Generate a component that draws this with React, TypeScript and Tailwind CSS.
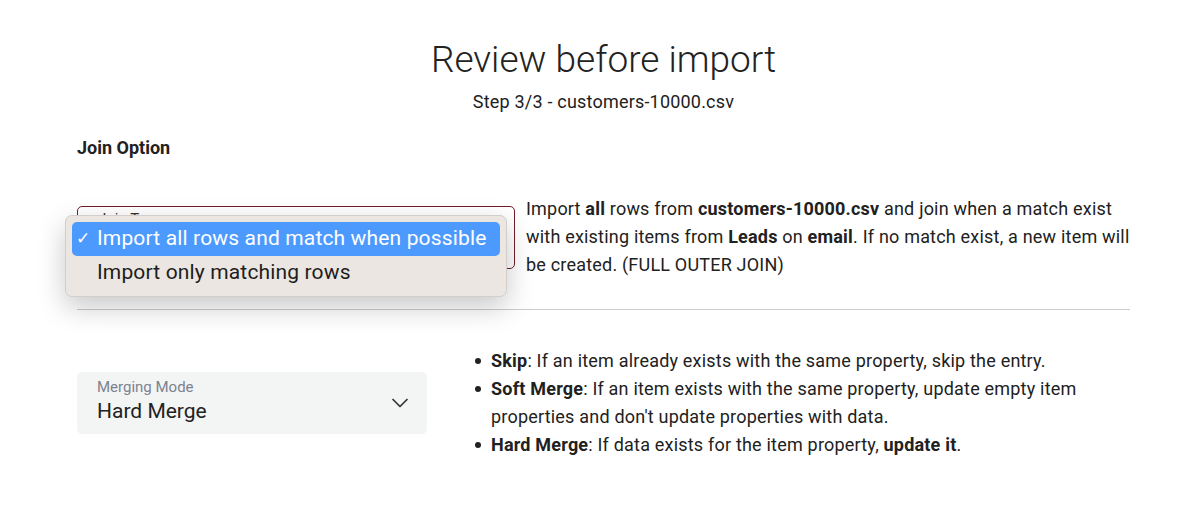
import React from "react";
import { ChevronDown } from "lucide-react";

function Dot() {
  return (
    <span className="flex h-[28px] w-[19px] shrink-0 items-center pl-[3px]">
      <span className="block h-[6px] w-[6px] rounded-full bg-[#222]" />
    </span>
  );
}

export default function App() {
  return (
    <div className="min-h-[516px] w-[1200px] bg-white text-[#212121] font-['Roboto','Liberation_Sans',sans-serif]">
      <div className="pl-[77px] pr-[70px] pt-[40px]">
        <h1 className="text-center text-[37px] leading-[40px] font-light text-[#222]">Review before import</h1>
        <p className="mt-[10px] text-center text-[18px] leading-[24px] tracking-[0.2px]">Step 3/3 - customers-10000.csv</p>

        <h2 className="mt-[22px] text-[18px] leading-[24px] font-bold">Join Option</h2>

        <div className="mt-[35px] flex items-center gap-[11px]">
          <div className="relative w-[438px] shrink-0">
            <div className="h-[63px] rounded-[5px] border border-[#6e1f27] bg-white pl-[20px] pt-[2px]">
              <div className="text-[15px] leading-[20px] text-[#333]">Join Type</div>
              <div className="text-[21px] leading-[28px]">Import all rows and match when possible</div>
            </div>
            <div className="absolute left-[-12px] top-[9px] z-10 w-[442px] rounded-[7px] border border-[#d3cec9] bg-[#ebe6e1] px-[6px] py-[6px] shadow-[0_10px_28px_rgba(0,0,0,0.22)]">
              <div className="flex h-[34px] items-center rounded-[5px] bg-[#4d9aff] pl-[4px] text-[21px] tracking-[0.15px] text-white">
                <span className="w-[21px] text-[17px]">✓</span>
                <span>Import all rows and match when possible</span>
              </div>
              <div className="flex h-[34px] items-center pl-[25px] text-[21px] tracking-[0.15px] text-[#1d1d1d]">Import only matching rows</div>
            </div>
          </div>
          <p className="w-[610px] shrink-0 text-[18px] leading-[28px] tracking-[0.2px]">
            Import <b>all</b> rows from <b>customers-10000.csv</b> and join when a match exist with existing items from <b>Leads</b> on <b>email</b>. If no match exist, a new item will be created. (FULL OUTER JOIN)
          </p>
        </div>

        <div className="mt-[30px] border-t border-[#cccccc]" />

        <div className="mt-[37px] flex items-center gap-[45px]">
          <div className="relative flex h-[62px] w-[350px] shrink-0 items-center rounded-[5px] bg-[#f3f4f4]">
            <div className="flex-1 pl-[20px] pb-[4px]">
              <div className="text-[15px] leading-[20px] text-[#7c8291]">Merging Mode</div>
              <div className="text-[21px] leading-[28px] text-[#222]">Hard Merge</div>
            </div>
            <ChevronDown size={28} strokeWidth={1.5} className="mr-[13px] mt-[-1px] text-[#333]" />
          </div>
          <ul className="w-[640px] text-[18px] leading-[28px] tracking-[0.2px]">
            <li className="flex">
              <Dot />
              <span><b>Skip</b>: If an item already exists with the same property, skip the entry.</span>
            </li>
            <li className="flex">
              <Dot />
              <span><b>Soft Merge</b>: If an item exists with the same property, update empty item properties and don't update properties with data.</span>
            </li>
            <li className="flex">
              <Dot />
              <span><b>Hard Merge</b>: If data exists for the item property, <b>update it</b>.</span>
            </li>
          </ul>
        </div>
      </div>
    </div>
  );
}
